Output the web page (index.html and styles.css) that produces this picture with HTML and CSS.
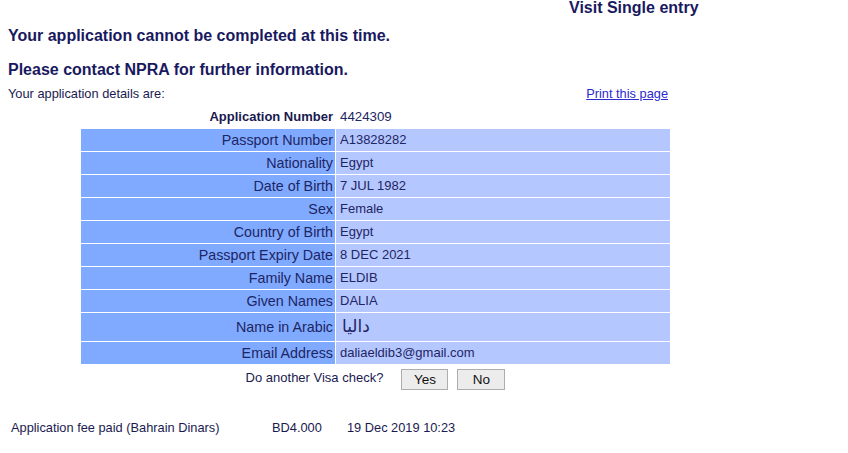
FILE: index.html
```html
<!DOCTYPE html>
<html lang="en">
<head>
<meta charset="utf-8">
<title>Visa Check</title>
<link rel="stylesheet" href="styles.css">
</head>
<body>
<div class="page">
  <div class="visa-type">Visit Single entry</div>
  <h1 class="msg">Your application cannot be completed at this time.</h1>
  <h2 class="msg msg-2">Please contact NPRA for further information.</h2>
  <div class="details-bar">
    <span>Your application details are:</span>
    <a class="print-link" href="#">Print this page</a>
  </div>
  <table class="details">
    <tr class="app-row">
      <td class="lbl">Application Number</td>
      <td class="val">4424309</td>
    </tr>
    <tr><td class="lbl">Passport Number</td><td class="val">A13828282</td></tr>
    <tr><td class="lbl">Nationality</td><td class="val">Egypt</td></tr>
    <tr><td class="lbl">Date of Birth</td><td class="val">7 JUL 1982</td></tr>
    <tr><td class="lbl">Sex</td><td class="val">Female</td></tr>
    <tr><td class="lbl">Country of Birth</td><td class="val">Egypt</td></tr>
    <tr><td class="lbl">Passport Expiry Date</td><td class="val">8 DEC 2021</td></tr>
    <tr><td class="lbl">Family Name</td><td class="val">ELDIB</td></tr>
    <tr><td class="lbl">Given Names</td><td class="val">DALIA</td></tr>
    <tr class="arabic-row"><td class="lbl">Name in Arabic</td><td class="val"><span class="arabic" lang="ar" dir="rtl">داليا</span></td></tr>
    <tr><td class="lbl">Email Address</td><td class="val">daliaeldib3@gmail.com</td></tr>
    <tr class="again-row">
      <td colspan="2" class="again">
        <span class="again-text">Do another Visa check?</span><button class="btn btn-yes" type="button">Yes</button><button class="btn btn-no" type="button">No</button>
      </td>
    </tr>
  </table>
  <div class="fee">
    <span class="fee-label">Application fee paid (Bahrain Dinars)</span>
    <span class="fee-amount">BD4.000</span>
    <span class="fee-date">19 Dec 2019 10:23</span>
  </div>
</div>
</body>
</html>
```

FILE: styles.css
```css
html, body {
  margin: 0;
  padding: 0;
  background: #ffffff;
}

body {
  font-family: "Liberation Sans", Arial, sans-serif;
  color: #1e2563;
  overflow: hidden;
}

.page {
  width: 848px;
}

.visa-type {
  margin: -1px 0 0 569px;
  font-size: 16px;
  line-height: 18px;
  font-weight: bold;
  color: #191960;
}

.msg {
  margin: 10px 0 0 8px;
  font-size: 16px;
  line-height: 18px;
  font-weight: bold;
  color: #191960;
}

.msg-2 {
  margin-top: 16px;
}

.details-bar {
  margin: 7px 0 0 8px;
  width: 660px;
  display: flex;
  justify-content: space-between;
  font-size: 12.8px;
  line-height: 15px;
  color: #1a1a50;
}

.print-link {
  color: #2b2bd0;
  text-decoration: underline;
}

.details {
  margin: 4px 0 0 80px;
  width: 591px;
  border-collapse: separate;
  border-spacing: 1px;
  font-size: 14.3px;
}

.details td {
  height: 22px;
  padding: 0;
  line-height: 22px;
  white-space: nowrap;
}

.details .lbl {
  width: 252px;
  padding-right: 2px;
  text-align: right;
  background: #7faaff;
}

.details .val {
  padding-left: 4px;
  background: #b5c7ff;
  font-size: 13px;
}

.details .app-row .lbl {
  background: transparent;
  font-weight: bold;
  color: #191950;
  font-size: 13px;
}

.details .app-row .val {
  background: transparent;
  font-size: 13.3px;
}

.details .arabic-row td {
  height: 28px;
}

.arabic {
  display: inline-block;
  margin-left: 2px;
  font-family: "DejaVu Sans", "Noto Sans", sans-serif;
  font-size: 17px;
  font-weight: normal;
  color: #1e2563;
}

.details .again {
  height: 26px;
  padding: 4px 0 0;
  text-align: center;
  vertical-align: top;
  line-height: 21px;
  background: transparent;
}

.again-text {
  font-size: 13px;
  color: #1a1a50;
  vertical-align: top;
  line-height: 17px;
}

.btn {
  height: 21px;
  padding: 0;
  border: 1px solid #adadad;
  border-radius: 0;
  background: #ececec;
  font-family: "Liberation Sans", Arial, sans-serif;
  font-size: 13.5px;
  line-height: 19px;
  color: #111111;
  vertical-align: top;
}

.btn-yes {
  width: 47px;
  margin-left: 18px;
}

.btn-no {
  width: 48px;
  margin-left: 9px;
}

.fee {
  display: flex;
  margin: 24px 0 0 11px;
  font-size: 12.8px;
  line-height: 15px;
  color: #1a1a50;
}

.fee-label {
  width: 261px;
}

.fee-amount {
  width: 75px;
}
```
